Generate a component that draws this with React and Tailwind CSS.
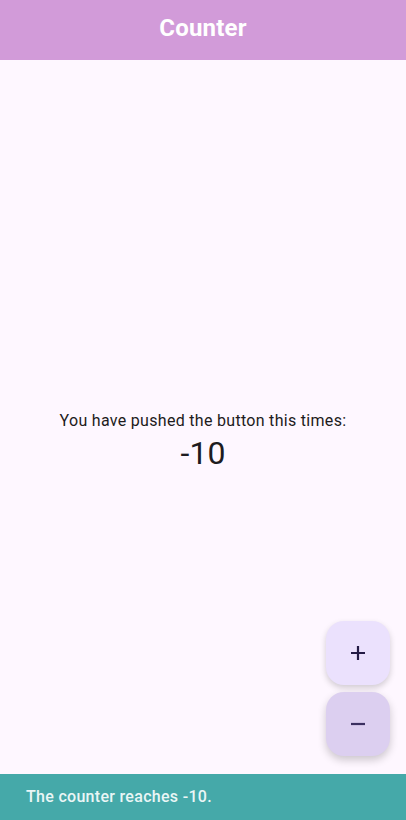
import React from "react";

export default function App() {
  return (
    <div
      className="relative flex h-[820px] w-full flex-col overflow-hidden bg-[#fef7ff]"
      style={{ fontFamily: "Roboto, 'Noto Sans', sans-serif" }}
    >
      <header className="flex h-[60px] shrink-0 items-center justify-center bg-[#d29bd9] pb-[4px]">
        <h1 className="text-[24px] font-bold leading-none tracking-[0.2px] text-white">Counter</h1>
      </header>
      <main className="flex flex-1 flex-col items-center justify-center pt-[2px]">
        <p className="text-[16px] leading-[24px] text-[#1d1b20] tracking-[0.3px]">
          You have pushed the button this times:
        </p>
        <p className="text-[32px] leading-[40px] text-[#1d1b20]">-10</p>
      </main>

      <div className="absolute right-[16px] top-[621px] flex flex-col gap-[7px]">
        <button className="flex h-[64px] w-[64px] items-center justify-center rounded-[18px] bg-[#ebe1fd] shadow-[0_3px_6px_rgba(0,0,0,0.18)]">
          <svg width="24" height="24" viewBox="0 0 24 24">
            <path d="M12 5v14M5 12h14" stroke="#241a45" strokeWidth="2.2" />
          </svg>
        </button>
        <button className="flex h-[64px] w-[64px] items-center justify-center rounded-[18px] bg-[#dccff0] shadow-[0_4px_8px_rgba(0,0,0,0.2)]">
          <svg width="24" height="24" viewBox="0 0 24 24">
            <path d="M5 12h14" stroke="#3b3060" strokeWidth="2.2" />
          </svg>
        </button>
      </div>

      <div className="absolute bottom-0 left-0 right-0 flex h-[46px] items-center bg-[#45a9a9] px-[26px]">
        <span className="text-[16px] font-medium tracking-[0.3px] text-[#eaf6f6]">
          The counter reaches -10.
        </span>
      </div>
    </div>
  );
}
